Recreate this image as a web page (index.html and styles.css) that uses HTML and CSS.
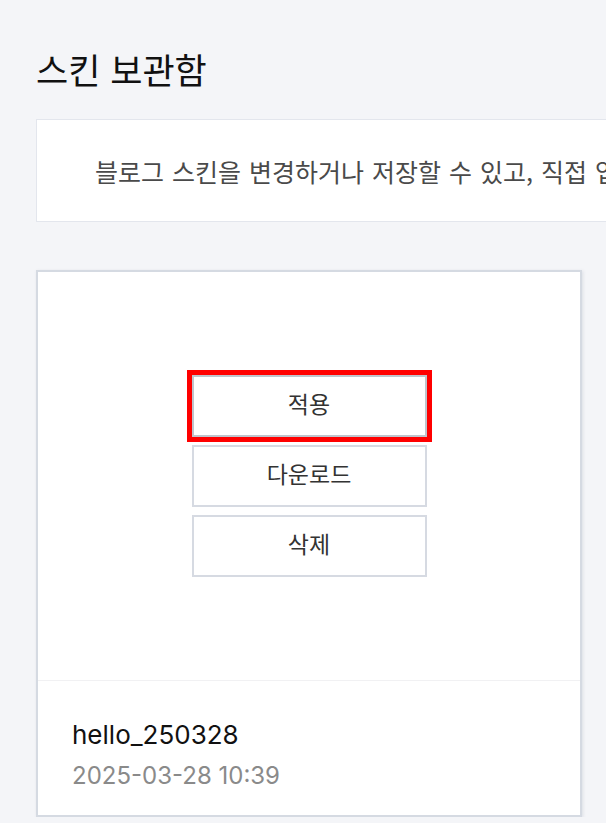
FILE: index.html
```html
<!DOCTYPE html>
<html lang="ko">
<head>
<meta charset="utf-8">
<title>스킨 보관함</title>
<link rel="stylesheet" href="styles.css">
</head>
<body>
<div class="page">
  <h1 class="title">스킨 보관함</h1>
  <div class="info">
    <p class="info-text">블로그 스킨을 변경하거나 저장할 수 있고, 직접 업로드한 스킨을 관리할 수 있습니다.</p>
  </div>
  <div class="card">
    <div class="card-preview">
      <div class="actions">
        <button class="btn btn-focus" type="button">적용</button>
        <button class="btn" type="button">다운로드</button>
        <button class="btn" type="button">삭제</button>
      </div>
    </div>
    <div class="card-info">
      <div class="skin-name">hello_250328</div>
      <div class="skin-date">2025-03-28 10:39</div>
    </div>
  </div>
</div>
</body>
</html>
```

FILE: styles.css
```css
html, body {
  margin: 0;
  padding: 0;
  background: #f4f5f8;
  overflow: hidden;
}
body {
  font-family: Inter, "Noto Sans CJK KR", sans-serif;
  color: #111;
}
.page {
  width: 1200px;
  padding: 46px 0 0 36px;
}
.title {
  margin: 0;
  font-family: "Noto Sans CJK KR", sans-serif;
  font-size: 35px;
  font-weight: 400;
  line-height: 46px;
  color: #111;
}
.info {
  margin-top: 27px;
  height: 101px;
  background: #fff;
  border: 1px solid #e3e6ed;
  display: flex;
  align-items: center;
  padding-left: 58px;
}
.info-text {
  margin: 0;
  font-family: "Noto Sans CJK KR", sans-serif;
  font-size: 25px;
  word-spacing: 1px;
  color: #4a4a4a;
  white-space: nowrap;
}
.card {
  margin-top: 48px;
  width: 542px;
  height: 543px;
  background: #fff;
  border: 2px solid #d5dae2;
  box-shadow: 1px 1px 3px rgba(150, 160, 175, 0.25);
  display: flex;
  flex-direction: column;
}
.card-preview {
  height: 408px;
  border-bottom: 1px solid #f1f1f3;
  display: flex;
  align-items: center;
  justify-content: center;
}
.actions {
  display: flex;
  flex-direction: column;
  gap: 8px;
}
.btn {
  width: 235px;
  height: 62px;
  background: #fff;
  border: 2px solid #d6dae2;
  font-family: "Noto Sans CJK KR", sans-serif;
  font-size: 23px;
  line-height: 1;
  color: #333;
  padding: 0 0 6px;
  cursor: pointer;
}
.btn-focus {
  border-color: #bfc4cc;
  outline: 5px solid #ff0000;
}
.card-info {
  flex: 1;
  padding: 34px 0 0 34px;
}
.skin-name {
  font-size: 26px;
  line-height: 40px;
  color: #111;
}
.skin-date {
  margin-top: 1px;
  font-size: 24px;
  line-height: 40px;
  color: #8a8a8a;
}
```
